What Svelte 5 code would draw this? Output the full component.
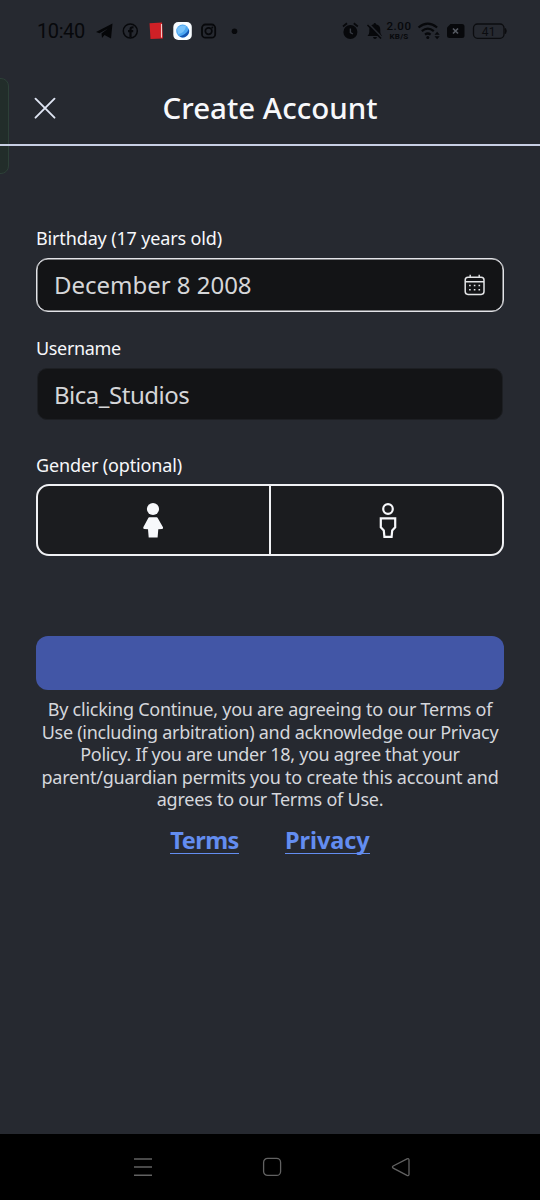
<script>
  const legal = [
    { text: 'By clicking Continue, you are agreeing to our Terms of', ls: -0.24 },
    { text: 'Use (including arbitration) and acknowledge our Privacy', ls: -0.28 },
    { text: 'Policy. If you are under 18, you agree that your', ls: -0.32 },
    { text: 'parent/guardian permits you to create this account and', ls: -0.21 },
    { text: 'agrees to our Terms of Use.', ls: -0.24 }
  ];
</script>

<div class="screen">
  <div class="edge"></div>
  <div class="status">
    <span class="time">10:40</span>
    <svg class="left-icons" width="146" height="24" viewBox="95 19 146 24">
      <path d="M96 32 112.500 23.500 111 38.500 104.500 35 102 38 101.500 33.500 108 28.500 99.500 33.200Z" fill="#050608" />
      <circle cx="130.300" cy="31" r="7" fill="none" stroke="#07080b" stroke-width="1.500" />
      <path d="M130.500 37v-7.500q0-2.500 3-2.200M128 31.200h5.200" fill="none" stroke="#07080b" stroke-width="2.200" />
      <path d="M149.500 23.300 162 22.600 163 38.500 150.500 39Z" fill="#cf2026" />
      <path d="M161.500 24v13.600" stroke="#f7c7c5" stroke-width="1.100" />
      <rect x="173.300" y="22" width="18.500" height="18" rx="5" fill="#f8fcff" />
      <circle cx="182.600" cy="31" r="6.400" fill="#4ba6f2" />
      <path d="M188.900 29a6.500 6.500 0 0 1-9.500 7.500q7-2 9.500-7.500Z" fill="#1556b3" />
      <path d="M177 29q3-5 9-3-1 7-8 8Z" fill="#78c2fa" />
      <rect x="202" y="24.500" width="13.200" height="13.200" rx="3.500" fill="none" stroke="#07080b" stroke-width="1.800" />
      <circle cx="208.600" cy="31.100" r="3.300" fill="none" stroke="#07080b" stroke-width="1.700" />
      <circle cx="212.300" cy="27.400" r="1" fill="#07080b" />
      <circle cx="234.500" cy="31.200" r="2.800" fill="#07080b" />
    </svg>
    <svg class="right-a" width="42" height="24" viewBox="341 19 42 24">
      <circle cx="350.400" cy="32" r="7" fill="#07080b" />
      <path d="M343 26.500l4-3.200M357.800 26.500l-4-3.200" stroke="#07080b" stroke-width="1.800" />
      <path d="M350.400 28.500v4l2.500 1.500" fill="none" stroke="#353941" stroke-width="1.400" />
      <path d="M367.500 36q1.800-1.500 1.800-4v-2q0-5 4.300-5.800 0-1.200 1.200-1.200t1.200 1.200q4.300.8 4.300 5.800v2q0 2.500 1.800 4ZM373 37h4q-.4 2-2 2t-2-2Z" fill="#07080b" />
      <path d="M368.500 23.500l13.500 14" stroke="#262930" stroke-width="1.800" />
      <path d="M367.500 25l13.500 13.500" stroke="#07080b" stroke-width="1.600" />
    </svg>
    <div class="speed"><b>2.00</b><span>KB/S</span></div>
    <svg class="right-b" width="94" height="24" viewBox="415 19 94 24">
      <path d="M418.500 27.500q9.300-7.600 18.600 0M421.800 31.200q6-5 12 0M425 34.600q2.800-2.200 5.600 0" fill="none" stroke="#07080b" stroke-width="2.200" />
      <circle cx="427.800" cy="37.500" r="1.500" fill="#07080b" />
      <path d="M434.500 34.800h5.200l-2.600-3ZM434.500 36.200h5.200l-2.600 3Z" fill="#07080b" />
      <path d="M450.500 24h11.500q2.500 0 2.500 2.500v9q0 2.500-2.500 2.500h-12.500q-2.500 0-2.500-2.500v-8Z" fill="#07080b" />
      <path d="M453 28.500l5 5M458 28.500l-5 5" stroke="#555961" stroke-width="1.700" />
      <rect x="473.500" y="24" width="30.500" height="14.300" rx="4" fill="none" stroke="#0b0c0f" stroke-width="1.300" />
      <path d="M505.200 28.500q1.600 2.600 0 5.200" stroke="#0b0c0f" stroke-width="1.600" fill="none" />
      <text x="481.800" y="35.500" font-size="12" letter-spacing=".2" fill="#0b0c0f">41</text>
    </svg>
  </div>

  <header>
    <svg class="close" width="24" height="24" viewBox="0 0 24 24">
      <path d="M2.500 2.700l19 19M21.500 2.700l-19 19" stroke="#dfe5f3" stroke-width="1.900" stroke-linecap="round" />
    </svg>
    <h1>Create Account</h1>
  </header>

  <main>
    <div class="label birthday-label">Birthday (17 years old)</div>
    <div class="field outlined">
      <span class="date">December 8 2008</span>
      <svg width="22" height="22" viewBox="0 0 22 22" fill="none" stroke="#e4e5e7">
        <rect x="1.200" y="3.200" width="18.800" height="17.200" rx="2.800" stroke-width="1.500" />
        <path d="M1.200 7.800h18.800M6.200.7v2.500M15.200.7v2.500" stroke-width="1.400" />
        <path d="M5.100 11.500h11.100M5.100 15.800h11.100" stroke-width="1.600" stroke-dasharray="1.600 3.100" />
      </svg>
    </div>
    <div class="label username-label">Username</div>
    <div class="field plain"><span class="user">Bica_Studios</span></div>
    <div class="label gender-label">Gender (optional)</div>
    <div class="genders">
      <div class="option female">
        <svg width="24" height="38" viewBox="0 0 24 38" fill="#f7f8fb">
          <circle cx="12" cy="8" r="6.100" />
          <path d="M8.300 16.200h7.400q.7 0 1 .7l5.300 9.400q.5 1.500-1 1.800l-3.700.2-.7 8.200H7.700L7 28.300l-3.700-.2q-1.500-.3-1-1.800l5-9.400q.3-.7 1-.7Z" />
        </svg>
      </div>
      <div class="option male">
        <svg width="24" height="38" viewBox="0 0 24 38" fill="none" stroke="#f7f8fb" stroke-width="2.200">
          <circle cx="12" cy="8" r="4.800" />
          <path d="M4.800 17.400h14.400v8.900l-3 3.100-.6 6.500H8.400l-.6-6.500-3-3.100Z" />
        </svg>
      </div>
    </div>
    <div class="continue"></div>
    <p>
      {#each legal as line}
        <span style="letter-spacing: {line.ls}px">{line.text}</span>
      {/each}
    </p>
    <nav><a href="#terms" class="terms">Terms</a><a href="#privacy" class="privacy">Privacy</a></nav>
  </main>

  <footer>
    <svg width="20" height="20" viewBox="0 0 20 20" stroke="#626262" stroke-width="1.400"><path d="M1 2h18M1 10h18M1 18.200h18" /></svg>
    <svg width="20" height="20" viewBox="0 0 20 20" fill="none" stroke="#626262" stroke-width="1.300"><rect x="1.600" y="1.400" width="17" height="17" rx="4" /></svg>
    <svg width="20" height="20" viewBox="0 0 20 20" fill="none" stroke="#626262" stroke-width="1.300"><path d="M2.200 9 16 1.900q2-.8 2 1v14.400q0 1.800-2 1L2.200 11.200q-1.500-1.100 0-2.200Z" /></svg>
  </footer>
</div>

<style>
  :global(body) { margin: 0; background: #262930; }
  .screen {
    position: relative; z-index: 0; width: 540px; height: 1200px; overflow: hidden;
    display: flex; flex-direction: column; box-sizing: border-box;
    background: #262930; color: #f7f8fb; font-family: "Noto Sans", sans-serif;
  }
  .edge {
    position: absolute; z-index: -1; left: -13px; top: 78px; width: 20px; height: 94px;
    border: 1px solid #2d4038; border-radius: 8px; background: #222d2a;
  }
  .status { height: 62px; display: flex; align-items: center; padding-left: 37px; flex: none; }
  .time { width: 58px; font: 20px/24px Roboto, sans-serif; letter-spacing: -0.400px; color: #07080b; white-space: nowrap; }
  .left-icons { flex: none; }
  .right-a { margin-left: 100px; flex: none; }
  .speed { width: 32px; display: flex; flex-direction: column; align-items: center; color: #07080b; font-family: Roboto, sans-serif; }
  .speed b { font-size: 11.500px; font-weight: 500; line-height: 12px; letter-spacing: .6px; }
  .speed span { font-size: 8px; font-weight: 700; line-height: 10px; letter-spacing: .2px; }
  .right-b { flex: none; font-family: Roboto, sans-serif; }
  header {
    height: 84px; flex: none; box-sizing: border-box; border-bottom: 2px solid #c8cfe4;
    display: grid; grid-template-columns: 57px 1fr 57px; align-items: center; padding-top: 10px;
  }
  .close { margin-left: 33px; }
  h1 { margin: 0; text-align: center; font-size: 29.500px; line-height: 40px; font-weight: 500; white-space: nowrap; }
  main { flex: 1; padding: 78px 36px 0; display: flex; flex-direction: column; }
  .label { font-size: 18px; line-height: 28px; height: 28px; white-space: nowrap; letter-spacing: -0.14px; }
  .field { box-sizing: border-box; display: flex; align-items: center; justify-content: space-between; background: #131416; color: #d5d6d8; font-size: 24px; line-height: 34px; }
  .date { letter-spacing: -0.02px; }
  .user { letter-spacing: -0.48px; }
  .outlined { height: 54px; margin-top: 6px; border: 1.500px solid #e3e4e8; border-radius: 12px; padding: 0 17px; box-shadow: inset 0 0 0 .5px #e3e4e8; }
  .username-label { margin-top: 22px; letter-spacing: -0.35px; }
  .plain { height: 52px; margin: 6px 1px 0; border-radius: 10px; padding: 1px 16px 0; border: 1px solid #1d1f23; }
  .gender-label { margin-top: 31px; }
  .genders { height: 72px; box-sizing: border-box; margin-top: 5px; border: 2px solid #f0f1f4; border-radius: 13px; background: #1b1c1f; display: grid; grid-template-columns: 231px 1fr; }
  .option { display: flex; align-items: center; justify-content: center; }
  .female { padding-right: 2px; }
  .male { border-left: 2px solid #f0f1f4; padding-left: 2px; }
  .continue { height: 54px; margin-top: 80px; border-radius: 12px; background: #4256a6; }
  p { margin: 8px 0 0; display: flex; flex-direction: column; align-items: center; color: #d5d7dc; font-size: 18px; line-height: 22.500px; }
  p span { white-space: nowrap; }
  nav { display: flex; justify-content: center; gap: 46px; margin-top: 13px; }
  a { color: #638df0; text-decoration: none; font-size: 23.500px; line-height: 32px; height: 29px; font-weight: 700; border-bottom: 1.500px solid #638df0; white-space: nowrap; }
  .terms { letter-spacing: -0.5px; }
  .privacy { letter-spacing: -0.05px; }
  footer { height: 66px; flex: none; background: #000; display: flex; align-items: center; justify-content: center; gap: 109px; padding-left: 4px; box-sizing: border-box; }
</style>
